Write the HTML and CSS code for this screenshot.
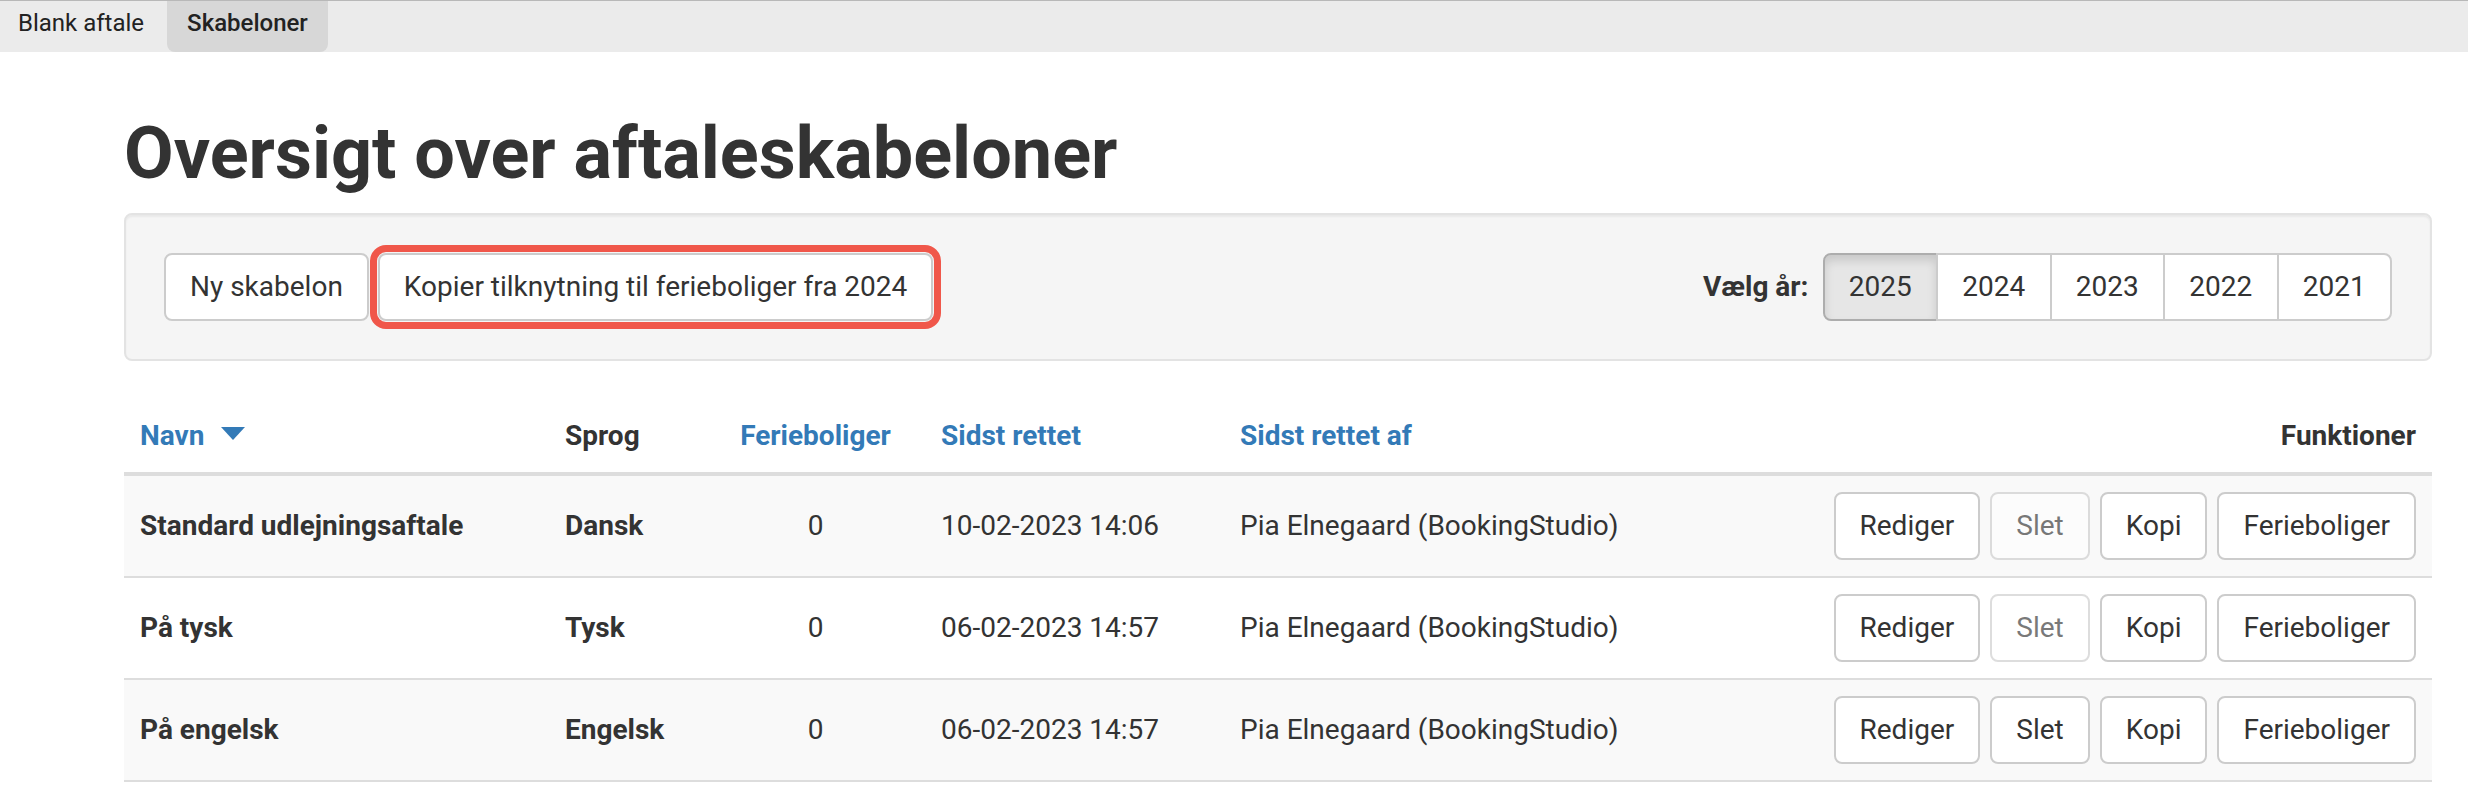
FILE: index.html
```html
<!DOCTYPE html>
<html lang="da">
<head>
<meta charset="utf-8">
<title>Oversigt over aftaleskabeloner</title>
<link rel="stylesheet" href="styles.css">
</head>
<body>
<nav class="topbar">
  <a class="tab">Blank aftale</a>
  <a class="tab tab-active">Skabeloner</a>
</nav>
<main class="page">
  <h1 class="title">Oversigt over aftaleskabeloner</h1>
  <div class="well">
    <div class="actions">
      <button class="btn">Ny skabelon</button>
      <button class="btn btn-highlight">Kopier tilknytning til ferieboliger fra 2024</button>
    </div>
    <div class="years">
      <span class="years-label">Vælg år:</span>
      <div class="btn-group">
        <button class="btn btn-active">2025</button>
        <button class="btn">2024</button>
        <button class="btn">2023</button>
        <button class="btn">2022</button>
        <button class="btn">2021</button>
      </div>
    </div>
  </div>
  <table class="grid">
    <colgroup>
      <col class="c-name">
      <col class="c-lang">
      <col class="c-count">
      <col class="c-date">
      <col class="c-by">
      <col>
    </colgroup>
    <thead>
      <tr>
        <th><a class="sort">Navn</a><span class="caret"></span></th>
        <th>Sprog</th>
        <th class="center"><a class="sort">Ferieboliger</a></th>
        <th><a class="sort">Sidst rettet</a></th>
        <th><a class="sort">Sidst rettet af</a></th>
        <th class="right">Funktioner</th>
      </tr>
    </thead>
    <tbody>
      <tr>
        <td class="strong">Standard udlejningsaftale</td>
        <td class="strong">Dansk</td>
        <td class="center">0</td>
        <td>10-02-2023 14:06</td>
        <td>Pia Elnegaard (BookingStudio)</td>
        <td class="right"><div class="row-btns"><button class="btn">Rediger</button><button class="btn btn-disabled">Slet</button><button class="btn">Kopi</button><button class="btn">Ferieboliger</button></div></td>
      </tr>
      <tr>
        <td class="strong">På tysk</td>
        <td class="strong">Tysk</td>
        <td class="center">0</td>
        <td>06-02-2023 14:57</td>
        <td>Pia Elnegaard (BookingStudio)</td>
        <td class="right"><div class="row-btns"><button class="btn">Rediger</button><button class="btn btn-disabled">Slet</button><button class="btn">Kopi</button><button class="btn">Ferieboliger</button></div></td>
      </tr>
      <tr>
        <td class="strong">På engelsk</td>
        <td class="strong">Engelsk</td>
        <td class="center">0</td>
        <td>06-02-2023 14:57</td>
        <td>Pia Elnegaard (BookingStudio)</td>
        <td class="right"><div class="row-btns"><button class="btn">Rediger</button><button class="btn">Slet</button><button class="btn">Kopi</button><button class="btn">Ferieboliger</button></div></td>
      </tr>
    </tbody>
  </table>
</main>
</body>
</html>
```

FILE: styles.css
```css
* { box-sizing: border-box; }

html, body {
  margin: 0;
  padding: 0;
  background: #fff;
  font-family: Roboto, "Liberation Sans", Arial, sans-serif;
  font-size: 28px;
  line-height: 40px;
  color: #333;
}

.topbar {
  display: flex;
  gap: 2px;
  height: 52px;
  background: #ebebeb;
  border-top: 1px solid #b8b8b8;
}

.tab {
  display: block;
  padding: 7px 21px 0 18px;
  font-size: 24px;
  line-height: 30px;
  color: #222;
}

.tab-active {
  background: #d7d7d7;
  border-radius: 0 0 8px 8px;
  padding-left: 20px;
  padding-right: 20px;
  font-weight: 500;
}

.page {
  padding: 0 36px 0 124px;
}

.title {
  margin: 62px 0 20px;
  font-size: 72px;
  line-height: 79px;
  font-weight: 700;
  color: #333;
}

.well {
  display: flex;
  justify-content: space-between;
  align-items: center;
  padding: 38px;
  margin-bottom: 39px;
  background: #f5f5f5;
  border: 2px solid #e3e3e3;
  border-radius: 8px;
  box-shadow: inset 0 2px 2px rgba(0, 0, 0, 0.05);
}

.actions {
  display: flex;
  gap: 9px;
}

.btn {
  display: inline-block;
  margin: 0;
  padding: 12px 24px;
  font-family: inherit;
  font-size: 28px;
  line-height: 40px;
  color: #333;
  background: #fff;
  border: 2px solid #ccc;
  border-radius: 8px;
  white-space: nowrap;
}

.btn-highlight {
  outline: 7px solid #f0574a;
  outline-offset: 1px;
  border-radius: 8px;
}

.years {
  display: flex;
  align-items: center;
  gap: 14px;
}

.years-label {
  font-weight: 700;
}

.btn-group {
  display: flex;
}

.btn-group .btn {
  border-radius: 0;
  margin-left: -2px;
  width: 115.5px;
  padding-left: 0;
  padding-right: 0;
  text-align: center;
}

.btn-group .btn:first-child {
  margin-left: 0;
  border-radius: 8px 0 0 8px;
}

.btn-group .btn:last-child {
  border-radius: 0 8px 8px 0;
}

.btn-group .btn-active {
  background: #e6e6e6;
  border-color: #adadad;
  box-shadow: inset 0 6px 10px rgba(0, 0, 0, 0.125);
}

.btn-disabled {
  opacity: 0.65;
  box-shadow: none;
}

.grid {
  width: 100%;
  border-collapse: collapse;
  table-layout: fixed;
}

.c-name { width: 425px; }
.c-lang { width: 157px; }
.c-count { width: 219px; }
.c-date { width: 299px; }
.c-by { width: 603px; }

.grid th {
  padding: 16px;
  text-align: left;
  vertical-align: bottom;
  font-weight: 700;
  border-bottom: 4px solid #ddd;
  white-space: nowrap;
}

.grid td {
  padding: 16px;
  vertical-align: middle;
  border-top: 2px solid #ddd;
  white-space: nowrap;
}

.grid tbody tr:nth-child(odd) {
  background: #f9f9f9;
}

.grid tbody tr:last-child td {
  border-bottom: 2px solid #ddd;
}

.sort {
  color: #337ab7;
  text-decoration: none;
}

.caret {
  display: inline-block;
  margin-left: 17px;
  width: 0;
  height: 0;
  border-left: 12.5px solid transparent;
  border-right: 12.5px solid transparent;
  border-top: 13px solid #337ab7;
  vertical-align: 5px;
}

.strong { font-weight: 700; }
.grid .center { text-align: center; }
.grid .right { text-align: right; }

.row-btns {
  display: flex;
  justify-content: flex-end;
  gap: 10px;
}
```
